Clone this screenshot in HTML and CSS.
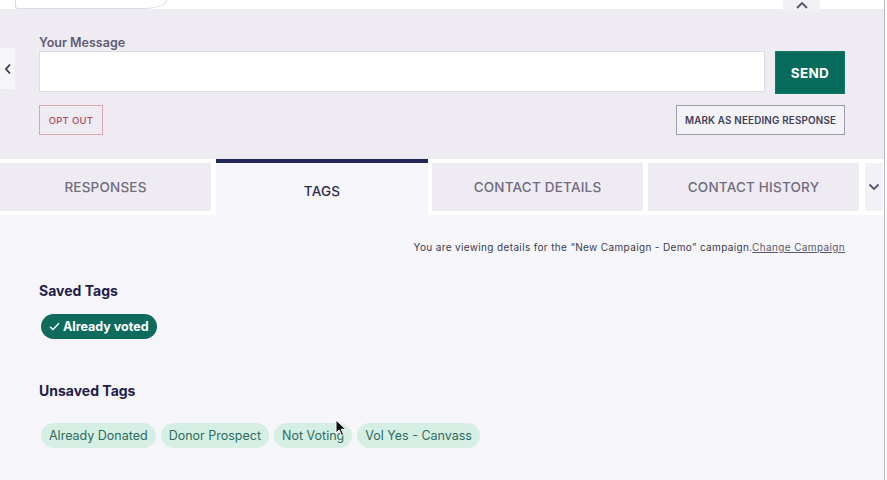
FILE: index.html
```html
<!DOCTYPE html>
<html lang="en">
<head>
<meta charset="utf-8">
<title>Tags</title>
<link rel="stylesheet" href="styles.css">
</head>
<body>
<div class="frame">
  <div class="top-strip">
    <div class="prev-card"></div>
    <div class="collapse-btn">
      <svg width="14" height="9" viewBox="0 0 14 9"><path d="M2 8 L7 3 L12 8" fill="none" stroke="#55536a" stroke-width="1.8"/></svg>
    </div>
  </div>

  <section class="compose">
    <div class="side-arrow">
      <svg width="8" height="12" viewBox="0 0 8 12"><path d="M6 1.5 L2 6 L6 10.5" fill="none" stroke="#3a3850" stroke-width="1.8"/></svg>
    </div>
    <label class="compose-label">Your Message</label>
    <div class="compose-row">
      <div class="msg-input"></div>
      <button class="btn-send">SEND</button>
    </div>
    <div class="action-row">
      <button class="btn-optout">OPT OUT</button>
      <button class="btn-mark">MARK AS NEEDING RESPONSE</button>
    </div>
  </section>

  <nav class="tabs">
    <div class="tab">RESPONSES</div>
    <div class="tab tab-active">TAGS</div>
    <div class="tab">CONTACT DETAILS</div>
    <div class="tab">CONTACT HISTORY</div>
    <div class="tab tab-more">
      <svg width="12" height="8" viewBox="0 0 12 8"><path d="M1.5 1.5 L6 6 L10.5 1.5" fill="none" stroke="#55536a" stroke-width="1.8"/></svg>
    </div>
  </nav>

  <section class="content">
    <p class="campaign-note">You are viewing details for the “New Campaign - Demo” campaign.<a class="change-link">Change Campaign</a></p>

    <h3 class="group-title">Saved Tags</h3>
    <div class="tag-list">
      <span class="tag tag-saved">
        <svg width="11" height="9" viewBox="0 0 11 9"><path d="M1 4.8 L4 7.6 L10 1.2" fill="none" stroke="#fff" stroke-width="1.4"/></svg>
        Already voted
      </span>
    </div>

    <h3 class="group-title unsaved-title">Unsaved Tags</h3>
    <div class="tag-list unsaved-list">
      <span class="tag">Already Donated</span>
      <span class="tag">Donor Prospect</span>
      <span class="tag">Not Voting</span>
      <span class="tag">Vol Yes - Canvass</span>
    </div>

    <svg class="cursor" width="12" height="18" viewBox="0 0 12 18"><path d="M1 1 L1 14 L4.2 11 L6.5 16.5 L8.6 15.6 L6.4 10.3 L10.8 10.3 Z" fill="#111" stroke="#fff" stroke-width="1"/></svg>
  </section>
</div>
</body>
</html>
```
FILE: styles.css
```css
* { box-sizing: border-box; }
html, body { margin: 0; padding: 0; }
body {
  background: #ffffff;
  font-family: Inter, "Open Sans", sans-serif;
  width: 887px;
  height: 480px;
  overflow: hidden;
}
.frame {
  width: 885px;
  height: 480px;
  border-right: 1px solid #b9b7c0;
  display: flex;
  flex-direction: column;
}
.top-strip {
  height: 9px;
  background: #ffffff;
  display: flex;
  justify-content: space-between;
  align-items: flex-start;
  padding: 0 64px 0 15px;
}
.prev-card {
  width: 152px;
  height: 9px;
  border: 1px solid #dcdae2;
  border-top: none;
  border-bottom-right-radius: 22px 9px;
  border-bottom-left-radius: 3px;
}
.collapse-btn {
  width: 37px;
  height: 12px;
  background: #f1f0f4;
  display: flex;
  justify-content: center;
  align-items: flex-start;
  position: relative;
  z-index: 1;
}
.compose {
  position: relative;
  background: #eeebf2;
  padding: 27px 39px 24px 39px;
  height: 150px;
}
.side-arrow {
  position: absolute;
  left: 0;
  top: 39px;
  width: 15px;
  height: 41px;
  background: #f6f5f8;
  display: flex;
  align-items: center;
  justify-content: center;
}
.compose-label {
  display: block;
  font-size: 12.5px;
  font-weight: 600;
  color: #5f5d72;
  line-height: 14px;
  height: 15px;
}
.compose-row {
  display: flex;
  gap: 10px;
  align-items: flex-start;
}
.msg-input {
  flex: 1;
  height: 41px;
  background: #ffffff;
  border: 1px solid #dcdae3;
}
.btn-send {
  width: 70px;
  height: 43px;
  background: #066b5d;
  border: 1px solid #0b7868;
  color: #ffffff;
  font-family: inherit;
  font-size: 13.5px;
  font-weight: 700;
  letter-spacing: 0.3px;
  padding: 0;
}
.action-row {
  display: flex;
  justify-content: space-between;
  margin-top: 11px;
}
.btn-optout {
  width: 64px;
  height: 30px;
  border: 1px solid #dba6b0;
  background: transparent;
  color: #b44a5d;
  font-family: inherit;
  font-size: 9.5px;
  font-weight: 500;
  letter-spacing: 0.3px;
  padding: 0;
}
.btn-mark {
  width: 169px;
  height: 30px;
  border: 1px solid #9f9dab;
  background: #f3f2f6;
  color: #413f58;
  font-family: inherit;
  font-size: 9.8px;
  font-weight: 600;
  letter-spacing: 0.2px;
  padding: 0;
}
.tabs {
  display: flex;
  gap: 5px;
  background: #ffffff;
  height: 56px;
  align-items: flex-start;
}
.tab {
  width: 211px;
  height: 48px;
  margin-top: 4px;
  background: #eeebf2;
  display: flex;
  align-items: center;
  justify-content: center;
  font-size: 13.5px;
  font-weight: 500;
  color: #6e6c7e;
  letter-spacing: 0.2px;
}
.tab-active {
  width: 212px;
  height: 56px;
  margin-top: 0;
  margin-right: -1px;
  border-top: 4px solid #1f2557;
  background: #f6f6fa;
  color: #2f2d4b;
  padding-top: 4px;
}
.tab-more {
  width: 18px;
  margin-left: 1px;
  background: #f2f1f5;
}
.content {
  position: relative;
  flex: 1;
  background: #f6f6fa;
  padding: 24px 39px 0 39px;
}
.campaign-note {
  margin: 0;
  text-align: right;
  font-size: 10px;
  letter-spacing: 0.36px;
  color: #3b394d;
  line-height: 16px;
}
.change-link {
  text-decoration: underline;
  color: #5a586c;
}
.group-title {
  margin: 27px 0 0 0;
  font-size: 14px;
  font-weight: 700;
  color: #1f1d4c;
  line-height: 18px;
}
.unsaved-title {
  margin-top: 43px;
}
.tag-list {
  display: flex;
  gap: 5px;
  margin: 14px 0 0 2px;
}
.unsaved-list {
  margin-top: 23px;
}
.tag {
  display: inline-flex;
  align-items: center;
  gap: 5px;
  height: 25px;
  padding: 0 8px;
  border-radius: 13px;
  background: #d5efe4;
  color: #2e6b5e;
  font-size: 12.5px;
  font-weight: 400;
}
.tag-saved {
  background: #0e6b5d;
  color: #ffffff;
  font-weight: 700;
  padding: 0 8px 0 8px;
  gap: 3px;
}
.cursor {
  position: absolute;
  left: 335px;
  top: 204px;
}
```
